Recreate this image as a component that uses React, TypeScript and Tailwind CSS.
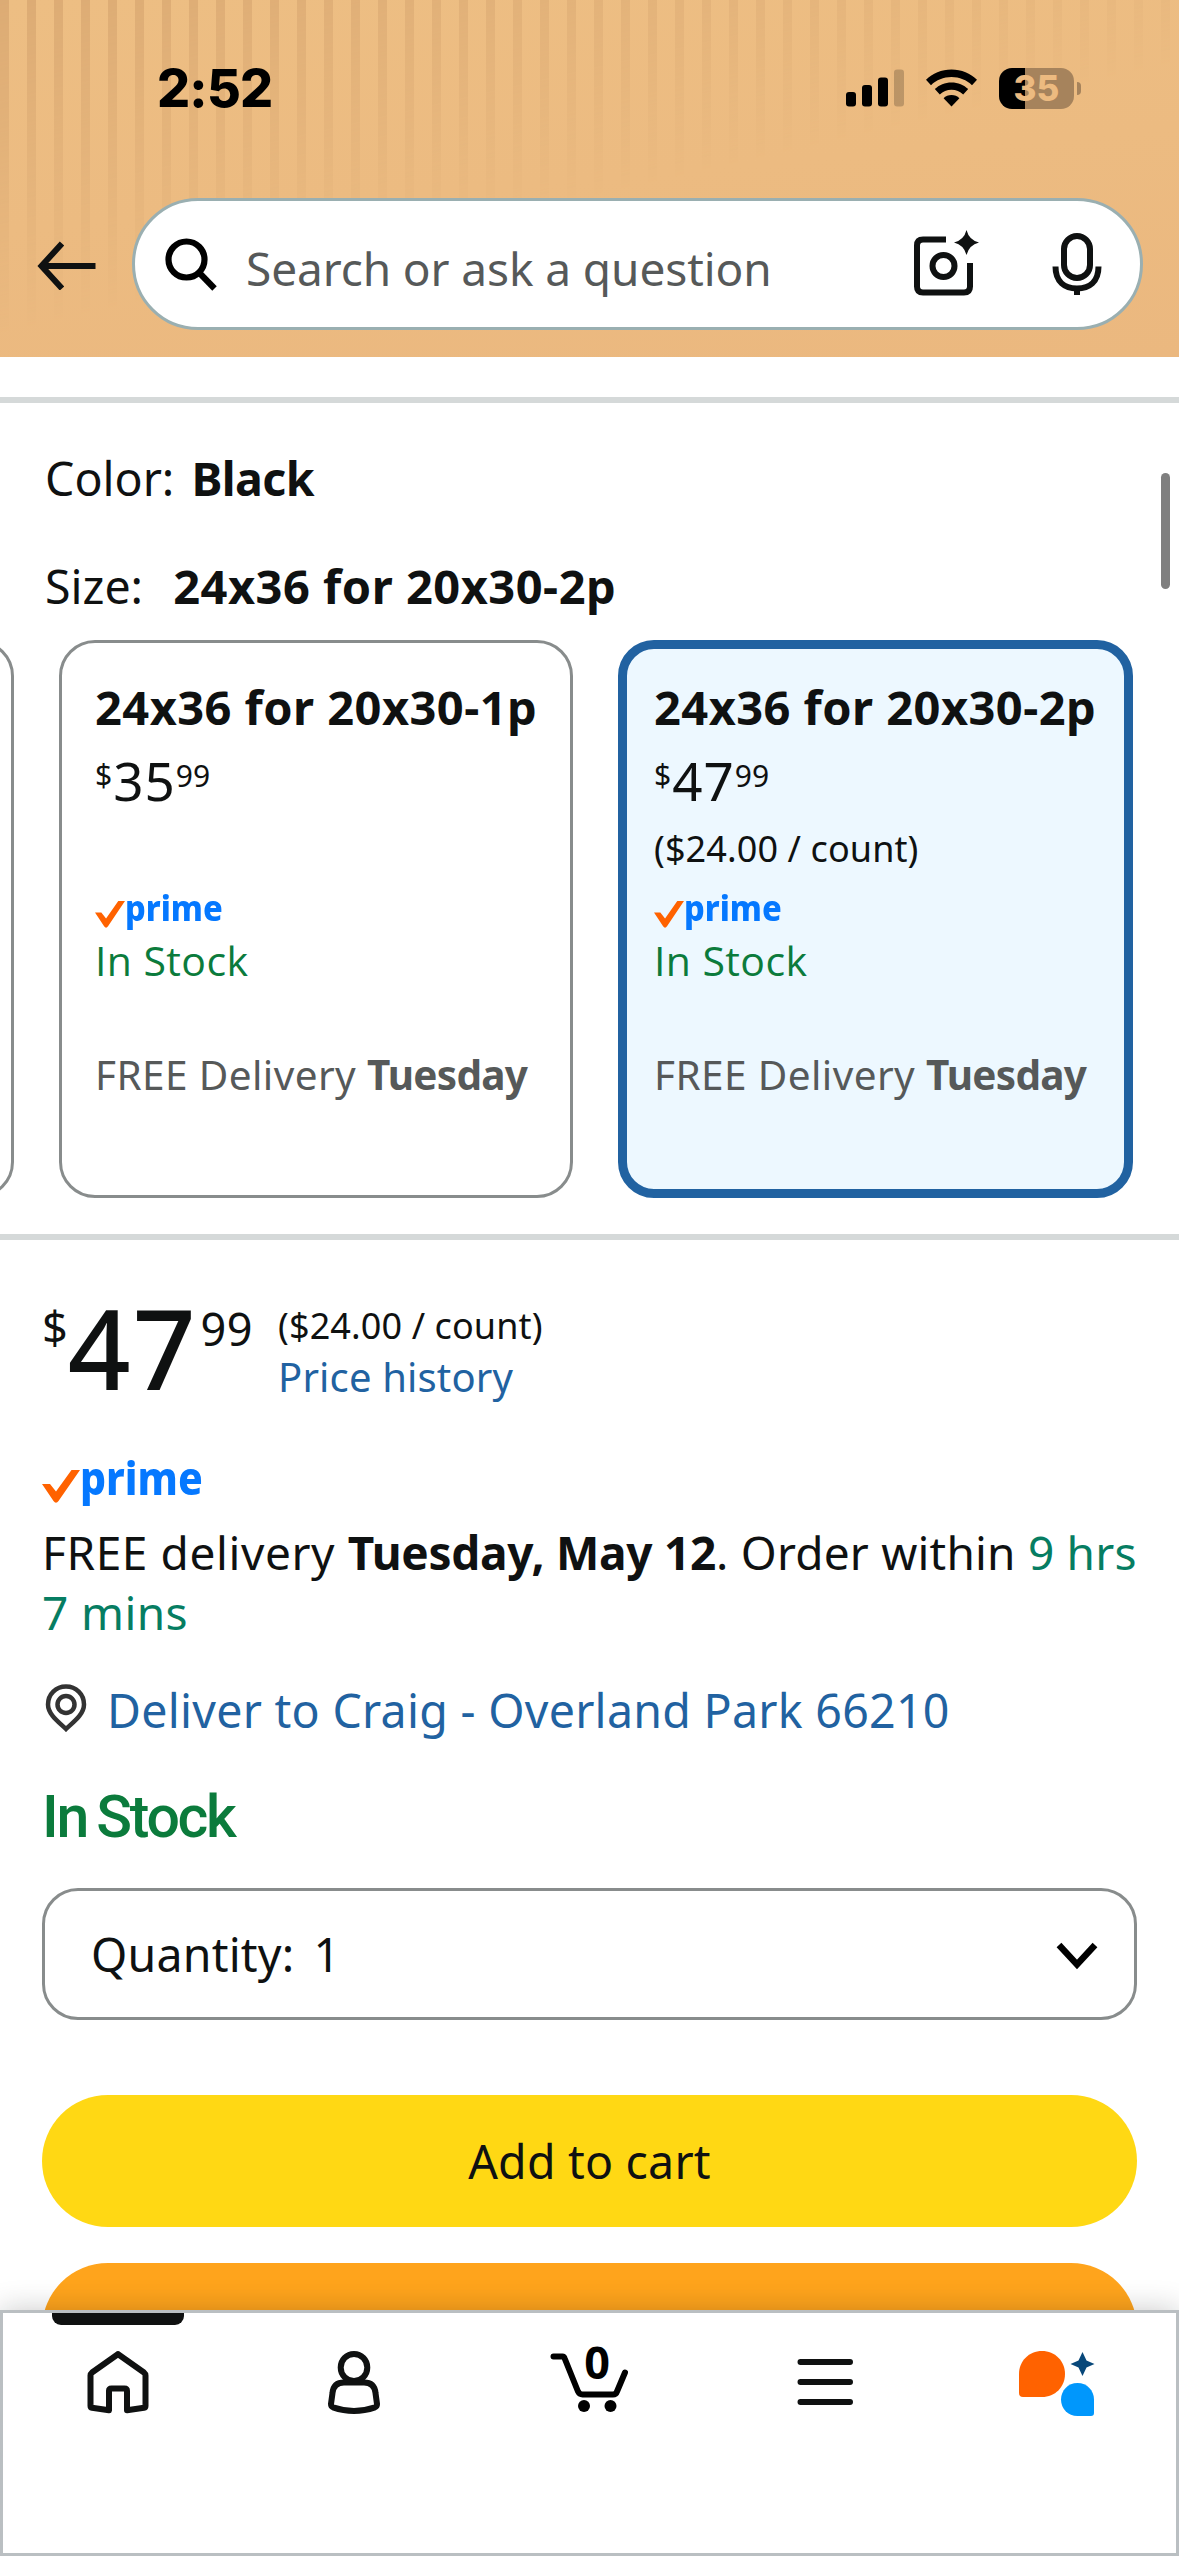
import { ReactNode } from "react";

type SizeOption = {
  id: string;
  label: string;
  dollars: string;
  cents: string;
  unitPrice?: string;
  selected?: boolean;
};

const OPTIONS: SizeOption[] = [
  { id: "1p", label: "24x36 for 20x30-1p", dollars: "35", cents: "99" },
  { id: "2p", label: "24x36 for 20x30-2p", dollars: "47", cents: "99", unitPrice: "($24.00 / count)", selected: true },
];

function StatusBar() {
  return (
    <div className="relative flex h-[176px] items-center pl-[157px] pr-[98px] text-black">
      <span className="mt-px font-['Inter'] text-[52px] font-extrabold leading-none tracking-[-0.800px]">2:52</span>
      <div className="ml-auto flex items-center gap-[22px]">
        <svg className="h-[38px] w-[58px]" viewBox="0 0 58 38">
          <rect x="0" y="23" width="10" height="14.5" rx="3" />
          <rect x="16" y="16" width="10" height="21.5" rx="3" />
          <rect x="32" y="8.5" width="10" height="29" rx="3" />
          <rect x="48" y="0.5" width="10" height="37" rx="3" opacity="0.2" />
        </svg>
        <svg className="h-[38px] w-[51px]" viewBox="0 0 51 38">
          <path d="M25.5 0.5C35.5 0.5 44.5 4.400 51 10.800L46 16.200C40.700 11 33.400 8 25.500 8S10.300 11 5 16.200L0 10.800C6.500 4.400 15.500 0.500 25.500 0.500Z" />
          <path d="M25.500 13.500C32 13.500 37.900 16 42.200 20.100L37.200 25.400C34.100 22.500 30 20.800 25.500 20.800S16.900 22.500 13.800 25.400L8.800 20.100C13.100 16 19 13.500 25.500 13.500Z" />
          <path d="M25.500 26C28.600 26 31.400 27.200 33.400 29.200L25.500 37.500L17.600 29.200C19.600 27.200 22.400 26 25.500 26Z" />
        </svg>
        <div className="flex items-center gap-[3px]">
          <div className="flex h-[41px] w-[75px] items-center justify-center rounded-[13px] bg-[linear-gradient(90deg,#000_26px,#a6835c_26px)] font-['Inter'] text-[35px] font-extrabold leading-none text-[#ecba80]">
            35
          </div>
          <div className="h-[13px] w-1 rounded-r-full bg-[#a6835c]" />
        </div>
      </div>
    </div>
  );
}

function SearchHeader() {
  return (
    <header className="relative h-[357px] shrink-0 bg-[linear-gradient(175deg,#edbe83,#ebb87f)]">
      <div className="absolute inset-0 bg-[repeating-linear-gradient(90deg,#dcab74_0_9px,transparent_9px_27px)] [mask-image:linear-gradient(167deg,black,transparent_53%)]" />
      <StatusBar />
      <div className="relative mt-[22px] flex items-center pl-9 pr-9">
        <svg className="h-[52px] w-[62px]" viewBox="0 0 62 52" fill="none" stroke="#0f1111" strokeWidth="6">
          <path d="M59.500 28H6M26 5.500L5.500 28L26 50.500" />
        </svg>
        <div className="ml-[34px] flex h-[132px] flex-1 items-center rounded-full border-[3px] border-[#9aafb1] bg-white pl-[30px] pr-[38px]">
          <svg className="h-[54px] w-[54px]" viewBox="0 0 54 54" fill="none" stroke="#000" strokeWidth="6.200">
            <circle cx="21.500" cy="22.500" r="18" />
            <path d="M34 35.500L49.500 51.500" />
          </svg>
          <span className="ml-[27px] mt-2 text-[46px] leading-[60px] tracking-[-0.100px] text-[#565959]">Search or ask a question</span>
          <svg className="-mt-0.5 ml-auto h-[68px] w-[68px]" viewBox="0 0 68 68" fill="none" stroke="#0f1111" strokeWidth="6">
            <path d="M34 10.500H11Q5 10.500 5 16.500V57.500Q5 63.500 11 63.500H52Q58 63.500 58 57.500V34" />
            <circle cx="31.500" cy="37" r="11" />
            <path d="M54.500 1Q57 11 67 13.500Q57 16 54.500 26Q52 16 42 13.500Q52 11 54.500 1Z" fill="#0f1111" stroke="none" />
          </svg>
          <svg className="-mr-px ml-[71px] h-[64px] w-[52px]" viewBox="0 0 52 64" fill="none" stroke="#0f1111" strokeWidth="6">
            <rect x="13" y="4" width="26" height="42" rx="13" />
            <path d="M4.500 34.500C4.500 50 14 56.500 26 56.500S47.500 50 47.500 34.500M26 56V63" />
          </svg>
        </div>
      </div>
    </header>
  );
}

function PrimeBadge({ large = false }: { large?: boolean }) {
  return (
    <div className={large ? "flex h-[50px] items-start" : "flex h-10 items-start"}>
      <svg className={large ? "mt-[18px] h-[33px] w-[38px]" : "mt-[14px] h-[27px] w-[30px]"} viewBox="0 0 38 33" preserveAspectRatio="none">
        <path d="M0 14H8L14 21.500L29.500 0H38L16.500 31Q14 34.500 11.500 31Z" fill="#ff6200" />
      </svg>
      <span
        className={
          large
            ? "origin-left scale-x-[0.890] text-[46px] font-extrabold leading-[50px] text-[#0578ff]"
            : "origin-left scale-x-[0.905] text-[36px] font-extrabold leading-[42px] text-[#0578ff]"
        }
      >
        prime
      </span>
    </div>
  );
}

function OptionCard({ option }: { option: SizeOption }) {
  return (
    <div
      className={
        option.selected
          ? "h-[558px] w-[515px] shrink-0 rounded-[36px] border-[9px] border-[#2162a1] bg-[#edf8ff] pl-[27px] pt-[28px]"
          : "h-[558px] w-[514px] shrink-0 rounded-[36px] border-[3px] border-[#888c8c] bg-white pl-[33px] pt-[34px]"
      }
    >
      <div className="whitespace-nowrap text-[47px] font-bold leading-[60px] tracking-[0.450px]">{option.label}</div>
      <div className="mt-[14px] flex h-[60px] items-start">
        <span className="text-[30px] leading-[48px]">$</span>
        <span className="ml-px text-[53px] leading-[60px] tracking-[1px]">{option.dollars}</span>
        <span className="text-[30px] leading-[49px]">{option.cents}</span>
      </div>
      <div className="mt-[14px] h-12 text-[36px] leading-[48px] tracking-[0.100px]">{option.unitPrice}</div>
      <div className="mt-[14px]">
        <PrimeBadge />
      </div>
      <div className="mt-2 font-['Open_Sans'] text-[41px] leading-[50px] tracking-[0.400px] text-[#0b7b3c]">In Stock</div>
      <div className="mt-[65px] whitespace-nowrap text-[40.5px] leading-[50px] tracking-[0.400px] text-[#565959]">
        FREE Delivery <b className="tracking-[-0.700px]">Tuesday</b>
      </div>
    </div>
  );
}

function Variations() {
  return (
    <section className="mt-[45px]">
      <div className="pl-[45px] text-[46.5px] leading-[61px]">
        Color: <b className="ml-[5px] tracking-[-0.600px]">Black</b>
      </div>
      <div className="mt-[47px] pl-[45px] text-[46.5px] leading-[61px]">
        Size: <b className="ml-[18px] text-[47px] tracking-[0.500px]">24x36 for 20x30-2p</b>
      </div>
      <div className="-ml-[500px] mt-[23px] flex gap-[45px]">
        <div className="h-[558px] w-[514px] shrink-0 rounded-[36px] border-[3px] border-[#888c8c]" />
        {OPTIONS.map((o) => (
          <OptionCard key={o.id} option={o} />
        ))}
      </div>
    </section>
  );
}

function BuyBox() {
  return (
    <section className="mt-[52px] px-[42px]">
      <div className="flex h-[110px] items-start">
        <span className="text-[45px] leading-[69px]">$</span>
        <span className="text-[110px] font-medium leading-[110px] tracking-[2px]">47</span>
        <span className="ml-[3px] text-[45px] leading-[74px] tracking-[0.500px]">99</span>
        <div className="ml-[25px] pt-2">
          <div className="text-[36px] leading-[52px] tracking-[0.100px]">($24.00 / count)</div>
          <div className="text-[40px] leading-[50px] tracking-[0.150px] text-[#2162a1]">Price history</div>
        </div>
      </div>

      <div className="mt-[50px]">
        <PrimeBadge large />
      </div>
      <p className="mt-5 whitespace-nowrap text-[46px] leading-[60px] tracking-[0.200px]">
        <span className="tracking-[0.600px]">FREE delivery </span>
        <b className="tracking-[-0.280px]">Tuesday, May 12</b>. Order within <span className="text-[#067d62]">9 hrs</span>
        <br />
        <span className="tracking-[0.400px] text-[#067d62]">7 mins</span>
      </p>

      <div className="mt-[38px] flex items-start text-[#2162a1]">
        <svg className="ml-[3px] mt-1 h-12 w-[42px]" viewBox="0 0 42 48" fill="none" stroke="#333" strokeWidth="4.500">
          <path d="M21 45C15 39 3 31 3 20.500C3 10 11 2.500 21 2.500S39 10 39 20.500C39 31 27 39 21 45Z" />
          <circle cx="21" cy="20.500" r="8.500" />
        </svg>
        <span className="ml-5 text-[46.5px] leading-[60px] tracking-[0.280px]">Deliver to Craig - Overland Park 66210</span>
      </div>

      <div className="mt-[42px] font-['Roboto'] text-[59px] font-medium leading-[69px] tracking-[-2.300px] text-[#0b7b3c] [word-spacing:-3px]">
        In Stock
      </div>

      <div className="mt-[37px] flex h-[132px] items-center rounded-[36px] border-[3px] border-[#888c8c] pl-[46px] pr-9 text-[46.5px]">
        <span className="mt-0.5 tracking-[0.200px]">Quantity:</span>
        <span className="ml-[19px] mt-0.5">1</span>
        <svg className="-mr-px ml-auto mt-1 h-[30px] w-[44px]" viewBox="0 0 44 30" fill="none" stroke="#000" strokeWidth="6.500">
          <path d="M4 4L22 23.500L40 4" />
        </svg>
      </div>

      <button className="mt-[75px] flex h-[132px] w-full items-center justify-center rounded-full bg-[#ffd814] pt-0.5 text-[46.5px] tracking-[0.200px]">
        Add to cart
      </button>
      <div className="mt-9 h-[132px] rounded-full bg-[#ffa41c]" />
    </section>
  );
}

function NavItem({ children }: { children: ReactNode }) {
  return (
    <div className="flex flex-1 justify-center pt-[31px]">
      <svg className="h-[80px] w-[80px] overflow-visible" viewBox="0 0 80 80" fill="none" stroke="#0f1111" strokeWidth="6" strokeLinejoin="round" strokeLinecap="round">
        {children}
      </svg>
    </div>
  );
}

function BottomNav() {
  return (
    <nav className="relative h-[246px] shrink-0 border-[3px] border-[#babfc2] bg-white shadow-[0_0_28px_rgba(15,17,17,0.220)]">
      <div className="absolute left-[49px] top-0 h-3 w-[132px] rounded-b-[9px] bg-[#0f1111]" />
      <div className="-mx-[3px] flex">
        <NavItem>
          <path d="M40.500 10.500Q40 10 39.500 10.500L14 28.500Q12.500 29.700 12.500 31.500V62Q12.500 63.500 14 63.800L31 66.300V47Q31 44.500 33.500 44.500H46.500Q49 44.500 49 47V66.300L66 63.800Q67.500 63.500 67.500 62V31.500Q67.500 29.700 66 28.500Z" />
        </NavItem>
        <NavItem>
          <ellipse cx="40" cy="23.500" rx="13.300" ry="13.500" />
          <path d="M30 38.500H50Q60.500 38.500 61.500 49L63 60Q63 62.500 61 63.300Q40 70.500 19 63.300Q17 62.500 17 60L18.500 49Q19.500 38.500 30 38.500Z" />
        </NavItem>
        <NavItem>
          <path d="M4.500 12.500H13.500Q15 12.500 15.700 14.500L29 47.500Q30.500 50.500 33.500 50.500H64Q67 50.500 68 47.500L76 28.500" stroke="#000" />
          <circle cx="35" cy="62" r="6" fill="#000" stroke="none" />
          <circle cx="61.500" cy="62" r="6" fill="#000" stroke="none" />
          <text x="48" y="35" textAnchor="middle" fill="#000" stroke="none" fontSize="45" fontWeight="700">0</text>
        </NavItem>
        <NavItem>
          <path d="M15.500 18H65M15.500 38H65M15.500 58H65" />
        </NavItem>
        <NavItem>
          <path d="M-2 30C-2 17 8 7 21 7S44 17 44 30S34 53 21 53H2Q-2 53 -2 49Z" fill="#ff6200" stroke="none" />
          <path d="M40 55.500C40 46.500 47 39 56.500 39S73 46.500 73 55.500V69Q73 72 70 72H56.500C47 72 40 64.500 40 55.500Z" fill="#0097fc" stroke="none" />
          <path d="M61.500 8L65.500 16.500L73.500 20L65.500 23.500L61.500 32L57.500 23.500L49.500 20L57.500 16.500Z" fill="#08487a" stroke="none" />
        </NavItem>
      </div>
    </nav>
  );
}

export default function App() {
  return (
    <div className="relative flex h-[2556px] w-[1179px] flex-col overflow-hidden bg-white font-['Noto_Sans',sans-serif] text-[#0f1111]">
      <SearchHeader />
      <main className="min-h-0 flex-1 overflow-hidden pt-10">
        <div className="h-1.5 bg-[#d5d9d9]" />
        <Variations />
        <div className="mt-9 h-1.5 bg-[#d5d9d9]" />
        <BuyBox />
      </main>
      <BottomNav />
      {/* scroll thumb */}
      <div className="absolute left-[1161px] top-[473px] h-[116px] w-[9px] rounded-full bg-[#7f7f7f]" />
    </div>
  );
}
